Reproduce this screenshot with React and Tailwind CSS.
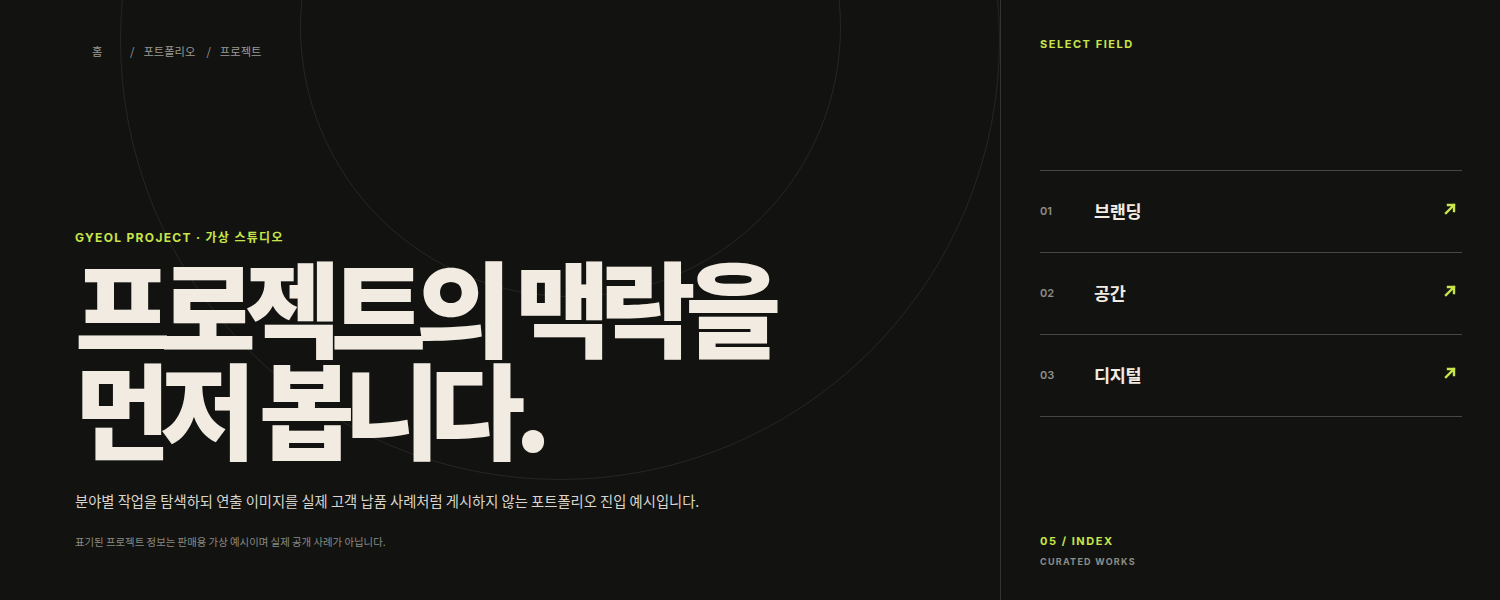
import React from "react";

const rows = [
  { n: "01", label: "브랜딩" },
  { n: "02", label: "공간" },
  { n: "03", label: "디지털" },
];

function Arrow() {
  return (
    <svg width="12" height="12" viewBox="0 0 12 12" fill="none">
      <path d="M2 10L10 2M4 2H10V8" stroke="#c8e64a" strokeWidth="2.4" strokeLinecap="square" />
    </svg>
  );
}

export default function App() {
  return (
    <div
      className="flex h-[600px] w-[1500px] overflow-hidden bg-[#121311] text-[#f1ebe1]"
      style={{ fontFamily: "Inter, 'Noto Sans CJK KR', sans-serif" }}
    >
      <section className="relative flex w-[1000px] flex-col overflow-hidden px-[75px]">
        <div className="pointer-events-none absolute left-[120px] top-[-400px] h-[880px] w-[880px] rounded-full border border-[#262724]" />
        <div className="pointer-events-none absolute left-[300px] top-[-243px] h-[540px] w-[541px] rounded-full border border-[#262724]" />

        <nav className="relative mt-[43px] flex items-center text-[11.3px] text-[#9a9a94]" style={{ fontFamily: "'Noto Sans CJK KR', sans-serif" }}>
          <span className="ml-[17px] w-[38px]">홈</span>
          <span>/</span>
          <span className="ml-[9px]">포트폴리오</span>
          <span className="ml-[11px]">/</span>
          <span className="ml-[9px]">프로젝트</span>
        </nav>

        <div className="relative mt-[169px]">
          <p className="text-[12px] font-bold tracking-[0.11em] text-[#c8e64a]">GYEOL PROJECT · 가상 스튜디오</p>
          <h1
            className="mt-[7px] whitespace-nowrap text-[104px] font-black leading-[102px] tracking-[-0.1em] text-[#f1ebe1]"
            style={{ fontFamily: "'Noto Sans CJK KR', sans-serif" }}
          >
            프로젝트의 맥락을
            <br />
            먼저 봅니다.
          </h1>
          <p className="mt-[32px] text-[14.3px] text-[#d9d5cc]" style={{ fontFamily: "'Noto Sans CJK KR', sans-serif" }}>
            분야별 작업을 탐색하되 연출 이미지를 실제 고객 납품 사례처럼 게시하지 않는 포트폴리오 진입 예시입니다.
          </p>
          <p className="mt-[23px] text-[10.4px] text-[#8a8a82]" style={{ fontFamily: "'Noto Sans CJK KR', sans-serif" }}>
            표기된 프로젝트 정보는 판매용 가상 예시이며 실제 공개 사례가 아닙니다.
          </p>
        </div>
      </section>

      <aside className="flex w-[500px] flex-col border-l border-[#343532] pl-[39px] pr-[38px]">
        <p className="mt-[36px] text-[11px] font-bold tracking-[0.14em] text-[#c8e64a]">SELECT FIELD</p>
        <ul className="mt-[117px] border-t border-[#464744]">
          {rows.map((r) => (
            <li key={r.n} className="flex h-[82px] items-center border-b border-[#464744]">
              <span className="w-[54px] text-[11px] font-semibold text-[#8e8e88]">{r.n}</span>
              <span className="flex-1 text-[17.5px] font-bold tracking-[-0.02em] text-[#f1ebe1]" style={{ fontFamily: "'Noto Sans CJK KR', sans-serif" }}>
                {r.label}
              </span>
              <span className="mr-[6px] -mt-[4px]">
                <Arrow />
              </span>
            </li>
          ))}
        </ul>
        <div className="mt-auto mb-[32px]">
          <p className="text-[11px] font-bold tracking-[0.14em] text-[#c8e64a]">05 / INDEX</p>
          <p className="mt-[5px] text-[9px] font-bold tracking-[0.14em] text-[#8e8e88]">CURATED WORKS</p>
        </div>
      </aside>
    </div>
  );
}
